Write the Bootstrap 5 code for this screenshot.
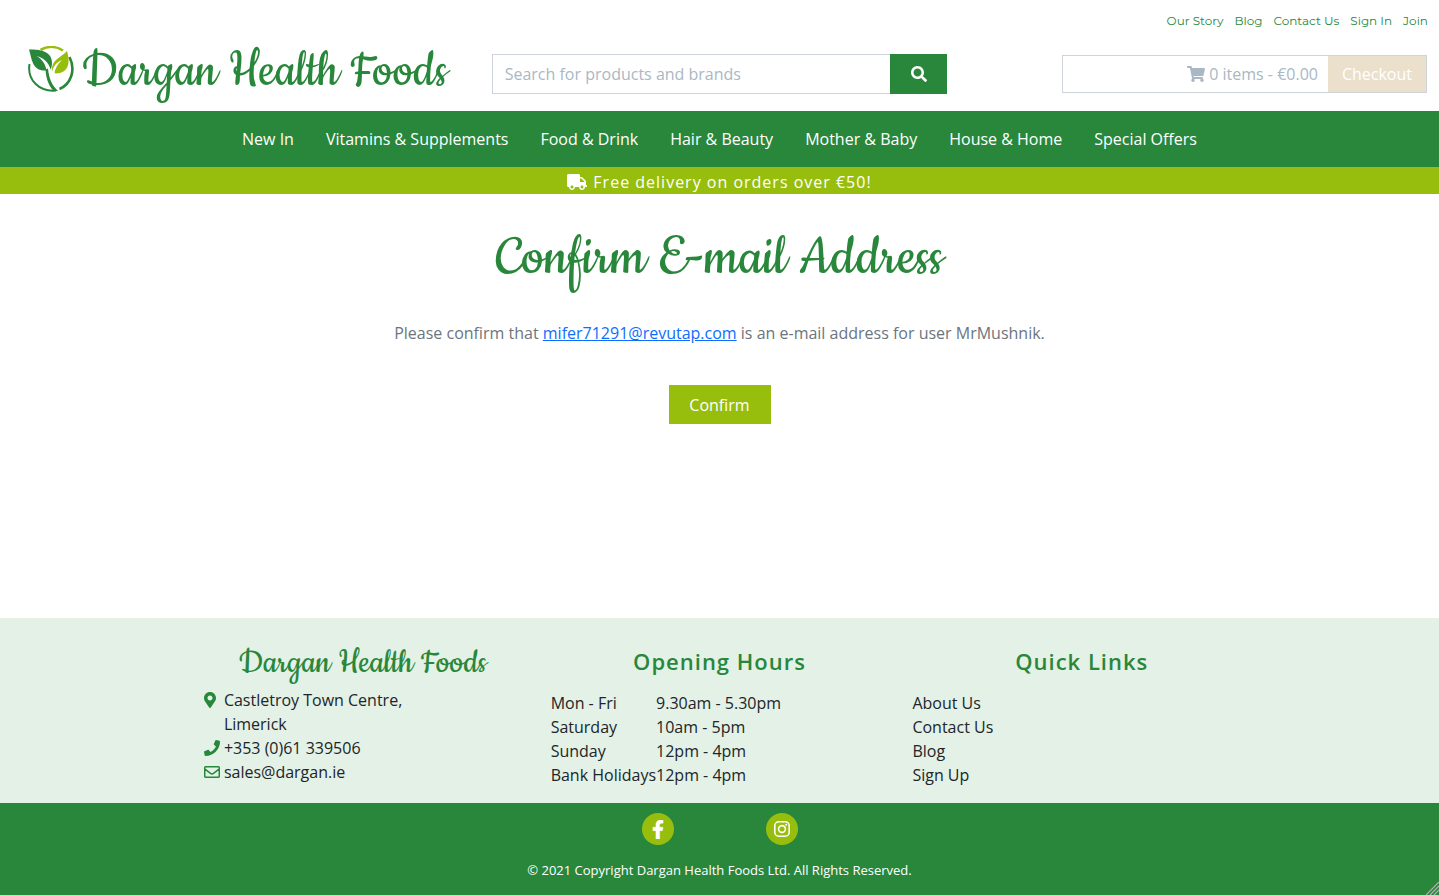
<!DOCTYPE html>
<html lang="en">
<head>
<meta charset="utf-8">
<meta name="viewport" content="width=device-width, initial-scale=1">
<title>Confirm E-mail Address - Dargan Health Foods</title>
<link rel="stylesheet" href="https://cdn.jsdelivr.net/npm/bootstrap@5.3.0/dist/css/bootstrap.min.css">
<style>
:root { --leaf: #29873b; --lime: #98be0d; --mist: #e3f1e6; }
body { font-family: "Open Sans", sans-serif; }
a { color: inherit; text-decoration: none; }
svg { fill: currentColor; flex-shrink: 0; }
.script-face { font-family: Cookie, "Dancing Script", "Liberation Serif", cursive; font-weight: 400; color: var(--leaf); }
.site-head { padding-bottom: 7px; }
.top-links { font: 400 12px/18px Montserrat, Inter, sans-serif; color: var(--leaf); gap: 11px; padding: 12px 11px 14px; }
.brand { gap: 8px; padding: 0 0 4px 16px; font-size: 56px; line-height: 56px; white-space: nowrap; }
.brand svg { margin-bottom: 6px; }
.form-control, .btn { border-radius: 0; }
.search-box .form-control { height: 40px; border-color: #ced4da; }
.search-box .form-control::placeholder { color: #aab7c4; }
.search-box .btn { width: 57px; background: var(--leaf); color: #fff; }
.basket { width: 365px; height: 38px; border: 1px solid #ced4da; color: #aab7c4; }
.basket-total { padding-right: 10px; }
.btn-checkout, .btn-checkout:disabled { background: #ebe0cc; color: #fff; border: 0; width: 98px; opacity: 1; }
.main-nav { background: var(--leaf); color: #fff; }
.main-nav .nav-link { color: #fff; padding: 16px; }
.offer { background: var(--lime); color: #fff; line-height: 24px; padding-top: 3px; letter-spacing: 1px; }
.offer svg { margin-right: 6px; }
.page-title { font-size: 64px; line-height: 64px; margin: 32px 0 31px; }
.btn-confirm { background: var(--lime); color: #fff; width: 102px; height: 39px; }
.info { background: var(--mist); padding: 25px 0 16px; color: #212529; }
.info h2 { font-size: 22px; line-height: 36px; font-weight: 600; letter-spacing: 1px; color: var(--leaf); text-align: center; margin-bottom: 12px; }
.info h2.script-face { font-size: 38px; line-height: 40px; font-weight: 400; letter-spacing: 0; margin-bottom: 5px; }
.contact-list li { display: grid; grid-template-columns: 20px 1fr; }
.contact-list svg { color: var(--leaf); margin-top: 4px; }
.contact { padding-left: 24px; padding-right: 18px; }
.details { padding-left: 11px; padding-right: 11px; }
.quick { padding-left: 13px; padding-right: 8px; }
.legal { background: var(--leaf); color: #fff; font-size: 13px; line-height: 20px; padding: 10px 0 15px; }
.social { gap: 92px; margin-bottom: 15px; }
.social a { width: 32px; height: 32px; border-radius: 50%; background: var(--lime); }
</style>
</head>
<body class="d-flex flex-column min-vh-100 position-relative">
<header class="site-head">
  <nav class="top-links d-flex justify-content-end" aria-label="Account">
    <a href="#">Our Story</a><a href="#">Blog</a><a href="#">Contact Us</a><a href="#">Sign In</a><a href="#">Join</a>
  </nav>
  <div class="container-fluid">
    <div class="row align-items-center">
      <div class="col-4">
        <a href="#" class="brand script-face d-flex align-items-center">
          <svg width="46" height="46" viewBox="0 0 46 46" aria-hidden="true">
            <g fill="none">
              <path stroke="#98be0d" stroke-width="2.6" d="M12.500 3.800A22 22 0 0 1 35 4.500"/>
              <path stroke="#29873b" stroke-width="2" d="M1.500 18C-1 34 11 46 28 44.500"/>
              <path stroke="#29873b" stroke-width="2.600" d="M41.500 11C48 24 43 38 31.500 43"/>
            </g>
            <path fill="#29873b" d="M1 3.500c10-.5 23 1.500 23 13 0 3-.5 5-1.500 7-1.500-7-7.500-12-14-13.500 6 3.500 9 8 10 14.500C4 25.500 4 13 1 3.500zM17.500 23.500l2.500-1c1 10 3.500 16 10 22.500h-4.500c-5-6-7.500-12.500-8-21.500z"/>
            <path fill="#98be0d" d="M39 5c3.500 12 2 22-11.500 22.500l-1-1c1-5 3.500-9 7.500-12.500-6 2.500-9 7-10 12-1-13 8.500-13.500 15-21z"/>
          </svg>
          <span>Dargan Health Foods</span>
        </a>
      </div>
      <div class="col-4">
        <form class="search-box input-group" role="search">
          <input class="form-control" type="search" placeholder="Search for products and brands" aria-label="Search for products and brands">
          <button class="btn d-flex align-items-center justify-content-center" type="button" aria-label="Search"><svg width="16" height="16" viewBox="0 0 512 512"><path d="M505 442.7L405.3 343c-4.5-4.5-10.6-7-17-7H372c27.6-35.3 44-79.7 44-128C416 93.1 322.9 0 208 0S0 93.1 0 208s93.1 208 208 208c48.3 0 92.7-16.4 128-44v16.3c0 6.4 2.5 12.5 7 17l99.7 99.7c9.4 9.4 24.6 9.4 33.9 0l28.3-28.3c9.4-9.4 9.4-24.6.1-34zM208 336c-70.7 0-128-57.2-128-128 0-70.7 57.2-128 128-128 70.7 0 128 57.2 128 128 0 70.7-57.2 128-128 128z"/></svg></button>
        </form>
      </div>
      <div class="col-4">
        <div class="basket d-flex ms-auto">
          <div class="basket-total flex-grow-1 d-flex align-items-center justify-content-end gap-1">
            <svg width="18" height="16" viewBox="0 0 576 512" aria-hidden="true"><path d="M528.12 301.319l47.273-208C578.806 78.301 567.391 64 551.99 64H159.208l-9.166-44.81C147.758 8.021 137.93 0 126.529 0H24C10.745 0 0 10.745 0 24v16c0 13.255 10.745 24 24 24h69.883l70.248 343.435C147.325 417.1 136 435.222 136 456c0 30.928 25.072 56 56 56s56-25.072 56-56c0-15.674-6.447-29.835-16.824-40h209.647C430.447 426.165 424 440.326 424 456c0 30.928 25.072 56 56 56s56-25.072 56-56c0-22.172-12.888-41.332-31.579-50.405l5.517-24.276c3.413-15.018-8.002-29.319-23.403-29.319H218.117l-6.545-32h293.145c11.206 0 20.92-7.754 23.403-18.681z"/></svg>
            <span>0 items - €0.00</span>
          </div>
          <button class="btn btn-checkout" type="button" disabled>Checkout</button>
        </div>
      </div>
    </div>
  </div>
</header>
<nav class="main-nav" aria-label="Shop">
  <ul class="nav justify-content-center">
    <li><a class="nav-link" href="#">New In</a></li>
    <li><a class="nav-link" href="#">Vitamins &amp; Supplements</a></li>
    <li><a class="nav-link" href="#">Food &amp; Drink</a></li>
    <li><a class="nav-link" href="#">Hair &amp; Beauty</a></li>
    <li><a class="nav-link" href="#">Mother &amp; Baby</a></li>
    <li><a class="nav-link" href="#">House &amp; Home</a></li>
    <li><a class="nav-link" href="#">Special Offers</a></li>
  </ul>
</nav>
<div class="offer d-flex justify-content-center align-items-center">
  <svg width="20" height="16" viewBox="0 0 640 512" aria-hidden="true"><path d="M624 352h-16V243.900c0-12.700-5.100-24.900-14.100-33.900L494 110.100c-9-9-21.200-14.100-33.900-14.100H416V48c0-26.500-21.500-48-48-48H48C21.500 0 0 21.500 0 48v320c0 26.500 21.500 48 48 48h16c0 53 43 96 96 96s96-43 96-96h128c0 53 43 96 96 96s96-43 96-96h48c8.800 0 16-7.200 16-16v-32c0-8.800-7.200-16-16-16zM160 464c-26.500 0-48-21.500-48-48s21.500-48 48-48 48 21.500 48 48-21.500 48-48 48zm320 0c-26.500 0-48-21.500-48-48s21.500-48 48-48 48 21.500 48 48-21.500 48-48 48zm80-208H416V144h44.100l99.900 99.900V256z"/></svg>
  <span>Free delivery on orders over €50!</span>
</div>
<main class="flex-grow-1 text-center px-3 pb-4">
  <h1 class="page-title script-face">Confirm E-mail Address</h1>
  <p class="text-secondary mb-0">Please confirm that <a class="text-primary text-decoration-underline" href="mailto:mifer71291@revutap.com">mifer71291@revutap.com</a> is an e-mail address for user MrMushnik.</p>
  <form class="mt-4 pt-3"><button class="btn btn-confirm" type="button">Confirm</button></form>
</main>
<footer>
  <div class="info">
    <div class="w-75 mx-auto">
      <div class="row g-0">
        <section class="col-4 contact">
          <h2 class="script-face">Dargan Health Foods</h2>
          <ul class="contact-list list-unstyled mb-0">
            <li><svg width="12" height="16" viewBox="0 0 384 512" aria-hidden="true"><path d="M172.268 501.67C26.97 291.031 0 269.413 0 192 0 85.961 85.961 0 192 0s192 85.961 192 192c0 77.413-26.97 99.031-172.268 309.67-9.535 13.774-29.93 13.773-39.464 0zM192 272c44.183 0 80-35.817 80-80s-35.817-80-80-80-80 35.817-80 80 35.817 80 80 80z"/></svg><span>Castletroy Town Centre,<br>Limerick</span></li>
            <li><svg width="16" height="16" viewBox="0 0 512 512" aria-hidden="true"><path d="M493.4 24.6l-104-24c-11.3-2.6-22.9 3.3-27.5 13.9l-48 112c-4.2 9.8-1.4 21.300 6.900 28l60.600 49.600c-36 76.700-98.900 140.500-177.200 177.200l-49.600-60.600c-6.800-8.300-18.200-11.100-28-6.900l-112 48C3.900 366.500-2 378.100.6 389.400l24 104C27.100 504.200 36.700 512 48 512c256.100 0 464-207.500 464-464 0-11.200-7.700-20.900-18.600-23.400z"/></svg><span>+353 (0)61 339506</span></li>
            <li><svg width="16" height="16" viewBox="0 0 16 16" aria-hidden="true"><path fill="none" stroke="currentColor" stroke-width="1.500" d="M1.500 2.750h13a.75.75 0 0 1 .75.75v9a.75.75 0 0 1-.75.75h-13a.75.75 0 0 1-.75-.75v-9a.75.75 0 0 1 .75-.75zM1 5.200l5.500 4.200q1.500 1.100 3 0L15 5.200"/></svg><a href="mailto:sales@dargan.ie">sales@dargan.ie</a></li>
          </ul>
        </section>
        <section class="col-4 details">
          <h2>Opening Hours</h2>
          <table>
            <tbody>
              <tr><td class="p-0">Mon - Fri</td><td class="p-0">9.30am - 5.30pm</td></tr>
              <tr><td class="p-0">Saturday</td><td class="p-0">10am - 5pm</td></tr>
              <tr><td class="p-0">Sunday</td><td class="p-0">12pm - 4pm</td></tr>
              <tr><td class="p-0">Bank Holidays</td><td class="p-0">12pm - 4pm</td></tr>
            </tbody>
          </table>
        </section>
        <section class="col-4 quick">
          <h2>Quick Links</h2>
          <ul class="list-unstyled mb-0">
            <li><a href="#">About Us</a></li><li><a href="#">Contact Us</a></li><li><a href="#">Blog</a></li><li><a href="#">Sign Up</a></li>
          </ul>
        </section>
      </div>
    </div>
  </div>
  <div class="legal text-center">
    <div class="social d-flex justify-content-center">
      <a href="#" class="d-flex align-items-center justify-content-center" aria-label="Facebook"><svg width="12" height="19" viewBox="0 0 320 512"><path stroke="currentColor" stroke-width="12" d="M279.14 288l14.22-92.66h-88.91v-60.13c0-25.35 12.42-50.06 52.24-50.06h40.42V6.26S260.43 0 225.36 0c-73.22 0-121.08 44.38-121.08 124.72v70.62H22.89V288h81.39v224h100.17V288z"/></svg></a>
      <a href="#" class="d-flex align-items-center justify-content-center" aria-label="Instagram"><svg width="18" height="18" viewBox="0 0 18 18"><g fill="none" stroke="currentColor"><rect x="1.800" y="1.800" width="14.400" height="14.400" rx="4" stroke-width="1.600"/><circle cx="9" cy="9" r="3.400" stroke-width="1.600"/></g><circle cx="13.200" cy="4.800" r="1"/></svg></a>
    </div>
    <div>© 2021 Copyright Dargan Health Foods Ltd. All Rights Reserved.</div>
  </div>
</footer>
<svg class="position-absolute bottom-0 end-0" width="13" height="13" viewBox="0 0 13 13" aria-hidden="true"><path d="M0 13L13 0M4 13L13 4M8 13L13 8" fill="none" stroke="#b5b5b5" stroke-width="1.200"/></svg>
<script src="https://cdn.jsdelivr.net/npm/bootstrap@5.3.0/dist/js/bootstrap.bundle.min.js"></script>
</body>
</html>
